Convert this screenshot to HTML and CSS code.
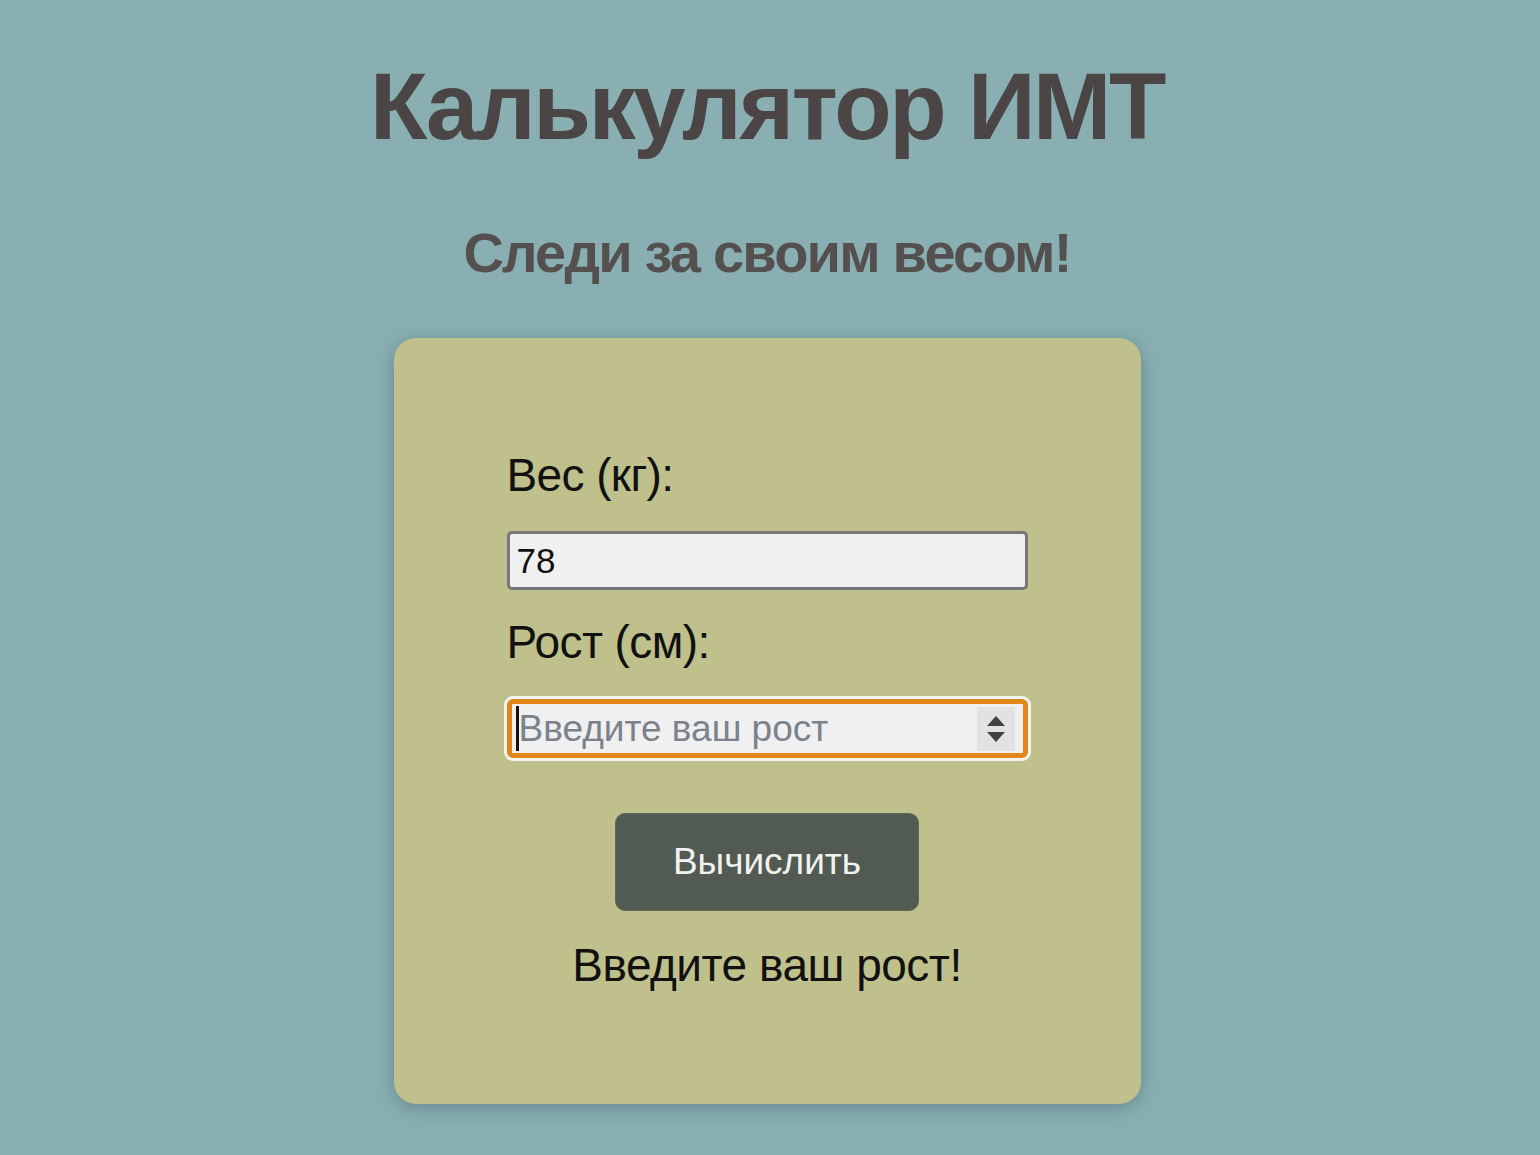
FILE: index.html
```html
<!DOCTYPE html>
<html lang="ru">
<head>
<meta charset="utf-8">
<title>Калькулятор ИМТ</title>
<link rel="stylesheet" href="styles.css">
</head>
<body>
<main class="page">
  <h1 class="title">Калькулятор ИМТ</h1>
  <h2 class="subtitle">Следи за своим весом!</h2>
  <section class="card">
    <label class="field-label">Вес (кг):</label>
    <div class="field field-weight"><span class="field-value">78</span></div>
    <label class="field-label">Рост (см):</label>
    <div class="field field-focused">
      <span class="caret"></span><span class="placeholder">Введите ваш рост</span>
      <span class="spinner">
        <svg width="22" height="32" viewBox="0 0 22 32"><path d="M11 3 L20 13 L2 13 Z" fill="#3f4040"/><path d="M2 19 L20 19 L11 29 Z" fill="#3f4040"/></svg>
      </span>
    </div>
    <div class="actions"><button class="btn">Вычислить</button></div>
    <p class="result">Введите ваш рост!</p>
  </section>
</main>
</body>
</html>
```
FILE: styles.css
```css
html, body {
  margin: 0;
  padding: 0;
}
body {
  background: #89afb2;
  font-family: "Liberation Sans", Arial, sans-serif;
  min-height: 1155px;
}
.page {
  display: flex;
  flex-direction: column;
  align-items: center;
  padding-top: 60px;
  padding-right: 6px;
}
.title {
  margin: 0;
  font-size: 94px;
  line-height: 94px;
  font-weight: bold;
  color: #4b4545;
  letter-spacing: -2.4px;
}
.subtitle {
  margin: 71px 0 0;
  font-size: 56px;
  line-height: 56px;
  font-weight: bold;
  color: #555050;
  letter-spacing: -1.8px;
}
.card {
  margin-top: 57px;
  width: 747px;
  box-sizing: border-box;
  padding: 114px 113px 116px;
  background: #bfc08b;
  border-radius: 22px;
  box-shadow: 0 4px 18px rgba(40, 70, 80, 0.35);
  display: flex;
  flex-direction: column;
}
.field-label {
  font-size: 46px;
  line-height: 46px;
  color: #111;
  letter-spacing: -0.6px;
}
.field {
  box-sizing: border-box;
  height: 59px;
  background: #f0f0f0;
  border-radius: 5px;
  display: flex;
  align-items: center;
  margin-top: 33px;
}
.field-weight {
  border: 3px solid #767676;
  padding-left: 7px;
  margin-bottom: 29px;
}
.field-value {
  font-size: 35px;
  color: #111;
}
.field-focused {
  border: 5px solid #e0861a;
  box-shadow: 0 0 0 3px #f4f4ee;
  border-radius: 6px;
  padding-left: 4px;
  padding-right: 8px;
  margin-top: 34px;
}
.caret {
  display: block;
  width: 3px;
  height: 45px;
  background: #111;
}
.placeholder {
  font-size: 37px;
  color: #7b828c;
  flex: 1;
}
.spinner {
  width: 38px;
  height: 44px;
  background: #e2e2e2;
  display: flex;
  align-items: center;
  justify-content: center;
}
.actions {
  display: flex;
  justify-content: center;
  margin-top: 55px;
}
.btn {
  width: 304px;
  height: 98px;
  background: #525b51;
  border: 1px solid #5f665c;
  border-radius: 10px;
  color: #f2f2f2;
  font-family: "Liberation Sans", Arial, sans-serif;
  font-size: 37px;
  padding: 0;
}
.result {
  margin: 31px 0 0;
  text-align: center;
  font-size: 46px;
  line-height: 46px;
  color: #111;
  letter-spacing: -0.5px;
}
```
